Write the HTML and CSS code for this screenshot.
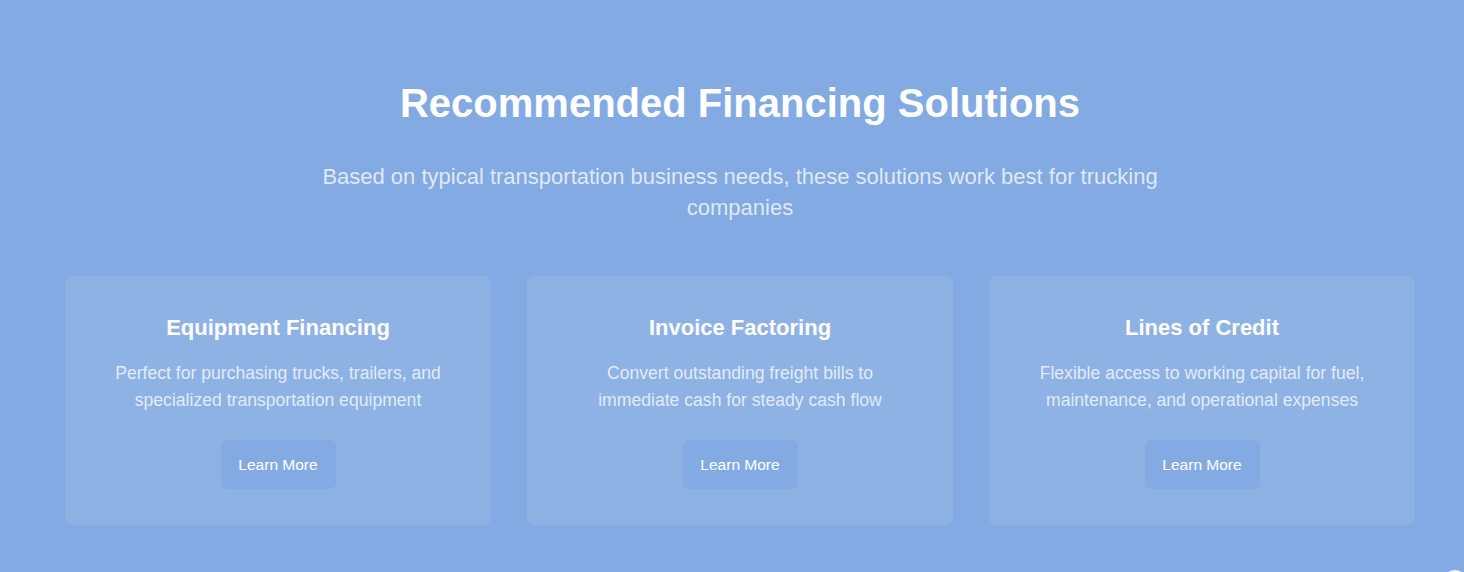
FILE: index.html
```html
<!DOCTYPE html>
<html lang="en">
<head>
<meta charset="utf-8">
<title>Recommended Financing Solutions</title>
<link rel="stylesheet" href="styles.css">
</head>
<body>
<section class="solutions">
  <h2 class="solutions-title">Recommended Financing Solutions</h2>
  <p class="solutions-sub">Based on typical transportation business needs, these solutions work best for trucking companies</p>
  <div class="cards">
    <div class="card">
      <h3 class="card-title">Equipment Financing</h3>
      <p class="card-text">Perfect for purchasing trucks, trailers, and specialized transportation equipment</p>
      <a class="card-btn" href="#">Learn More</a>
    </div>
    <div class="card">
      <h3 class="card-title">Invoice Factoring</h3>
      <p class="card-text">Convert outstanding freight bills to immediate cash for steady cash flow</p>
      <a class="card-btn" href="#">Learn More</a>
    </div>
    <div class="card">
      <h3 class="card-title">Lines of Credit</h3>
      <p class="card-text">Flexible access to working capital for fuel, maintenance, and operational expenses</p>
      <a class="card-btn" href="#">Learn More</a>
    </div>
  </div>
</section>
<div class="chat-bubble"></div>
</body>
</html>
```
FILE: styles.css
```css
html, body {
  margin: 0;
  padding: 0;
  height: 100%;
  overflow: hidden;
}
body {
  background: #83aae3;
  font-family: "Liberation Sans", Arial, sans-serif;
  color: #fff;
  position: relative;
}
.solutions {
  padding: 79px 49px 0 65px;
  display: flex;
  flex-direction: column;
  align-items: center;
}
.solutions-title {
  margin: 0;
  font-size: 40px;
  line-height: 48px;
  font-weight: 700;
  text-align: center;
}
.solutions-sub {
  margin: 34px 0 0;
  max-width: 900px;
  font-size: 22px;
  line-height: 31px;
  text-align: center;
  color: rgba(255, 255, 255, 0.75);
}
.cards {
  margin-top: 53px;
  width: 100%;
  display: grid;
  grid-template-columns: repeat(3, 1fr);
  gap: 36px;
}
.card {
  background: rgba(255, 255, 255, 0.1);
  border-radius: 8px;
  padding: 39px 40px 36px;
  display: flex;
  flex-direction: column;
  align-items: center;
  text-align: center;
}
.card-title {
  margin: 0 0 19px;
  font-size: 22px;
  line-height: 26px;
  font-weight: 700;
}
.card-text {
  margin: 0 0 26px;
  font-size: 17.6px;
  line-height: 27px;
  color: rgba(255, 255, 255, 0.75);
}
.card-btn {
  display: flex;
  align-items: center;
  justify-content: center;
  width: 115px;
  height: 49px;
  box-sizing: border-box;
  background: #84aae3;
  border-radius: 6px;
  color: #fff;
  text-decoration: none;
  font-size: 15.5px;
}
.chat-bubble {
  position: absolute;
  right: -3px;
  bottom: -22px;
  width: 24px;
  height: 24px;
  border-radius: 50%;
  background: rgba(255, 255, 255, 0.9);
}
```
